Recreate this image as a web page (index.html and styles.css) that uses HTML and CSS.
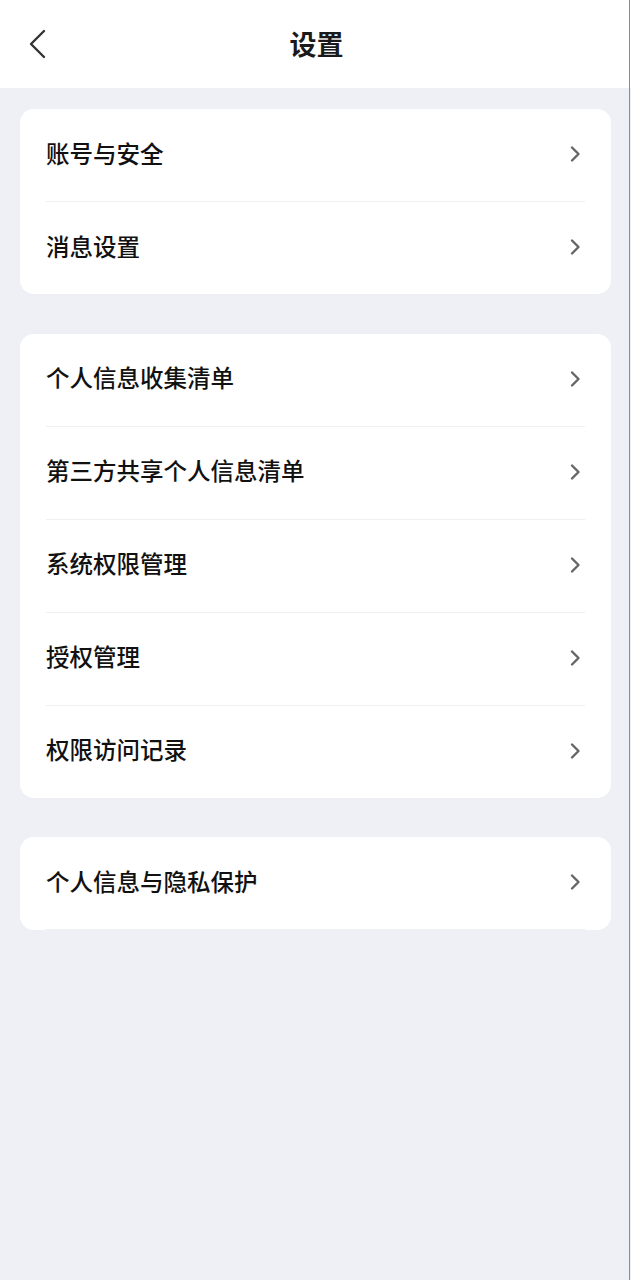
FILE: index.html
```html
<!DOCTYPE html>
<html lang="zh-CN">
<head>
<meta charset="utf-8">
<title>设置</title>
<link rel="stylesheet" href="styles.css">
</head>
<body>
<div class="page">
  <header class="topbar">
    <svg class="back" viewBox="0 0 20 30" width="20" height="30"><path d="M17 2 L4 15 L17 28" fill="none" stroke="#333" stroke-width="2.4" stroke-linecap="round" stroke-linejoin="round"/></svg>
    <h1 class="title">设置</h1>
  </header>
  <main class="content">
    <section class="card">
      <div class="row"><span class="label">账号与安全</span><svg class="chev" viewBox="0 0 12 18" width="12" height="18"><path d="M3 2.5 L9.5 9 L3 15.5" fill="none" stroke="#666" stroke-width="2.4" stroke-linecap="round" stroke-linejoin="round"/></svg></div>
      <div class="row last"><span class="label">消息设置</span><svg class="chev" viewBox="0 0 12 18" width="12" height="18"><path d="M3 2.5 L9.5 9 L3 15.5" fill="none" stroke="#666" stroke-width="2.4" stroke-linecap="round" stroke-linejoin="round"/></svg></div>
    </section>
    <section class="card">
      <div class="row"><span class="label">个人信息收集清单</span><svg class="chev" viewBox="0 0 12 18" width="12" height="18"><path d="M3 2.5 L9.5 9 L3 15.5" fill="none" stroke="#666" stroke-width="2.4" stroke-linecap="round" stroke-linejoin="round"/></svg></div>
      <div class="row"><span class="label">第三方共享个人信息清单</span><svg class="chev" viewBox="0 0 12 18" width="12" height="18"><path d="M3 2.5 L9.5 9 L3 15.5" fill="none" stroke="#666" stroke-width="2.4" stroke-linecap="round" stroke-linejoin="round"/></svg></div>
      <div class="row"><span class="label">系统权限管理</span><svg class="chev" viewBox="0 0 12 18" width="12" height="18"><path d="M3 2.5 L9.5 9 L3 15.5" fill="none" stroke="#666" stroke-width="2.4" stroke-linecap="round" stroke-linejoin="round"/></svg></div>
      <div class="row"><span class="label">授权管理</span><svg class="chev" viewBox="0 0 12 18" width="12" height="18"><path d="M3 2.5 L9.5 9 L3 15.5" fill="none" stroke="#666" stroke-width="2.4" stroke-linecap="round" stroke-linejoin="round"/></svg></div>
      <div class="row last"><span class="label">权限访问记录</span><svg class="chev" viewBox="0 0 12 18" width="12" height="18"><path d="M3 2.5 L9.5 9 L3 15.5" fill="none" stroke="#666" stroke-width="2.4" stroke-linecap="round" stroke-linejoin="round"/></svg></div>
    </section>
    <section class="card">
      <div class="row"><span class="label">个人信息与隐私保护</span><svg class="chev" viewBox="0 0 12 18" width="12" height="18"><path d="M3 2.5 L9.5 9 L3 15.5" fill="none" stroke="#666" stroke-width="2.4" stroke-linecap="round" stroke-linejoin="round"/></svg></div>
    </section>
  </main>
</div>
</body>
</html>
```
FILE: styles.css
```css
* { box-sizing: border-box; }
html, body { margin: 0; padding: 0; }
body {
  background: #eef0f5;
  font-family: "Noto Sans CJK SC", "Noto Sans", sans-serif;
  color: #111;
}
.page {
  width: 631px;
  min-height: 1280px;
  background: #eef0f5;
  position: relative;
}
.page::after {
  content: "";
  position: absolute;
  top: 0;
  bottom: 0;
  right: 1px;
  width: 1.5px;
  background: #8c8c8c;
}
.topbar {
  height: 88px;
  background: #fff;
  display: flex;
  align-items: center;
  justify-content: center;
  position: relative;
}
.back {
  position: absolute;
  left: 27px;
  top: 29px;
}
.title {
  margin: 0 0 2px 0;
  font-size: 27px;
  font-weight: 700;
  color: #1a1a1a;
  line-height: 1;
  padding-left: 2px;
}
.content {
  display: flex;
  flex-direction: column;
  gap: 39.5px;
  padding: 21px 20px 0 20px;
}
.card {
  background: #fff;
  border-radius: 14px;
  padding: 0 26px 0 26px;
}
.row {
  height: 93px;
  display: flex;
  align-items: center;
  justify-content: space-between;
  border-bottom: 1px solid #efefef;
}
.row.last {
  height: 92px;
  border-bottom: none;
}
.label {
  font-size: 23.5px;
  font-weight: 500;
  line-height: 1;
  margin-bottom: 3px;
  color: #111;
}
.chev {
  margin-right: 4px;
  margin-bottom: 2px;
}
```
